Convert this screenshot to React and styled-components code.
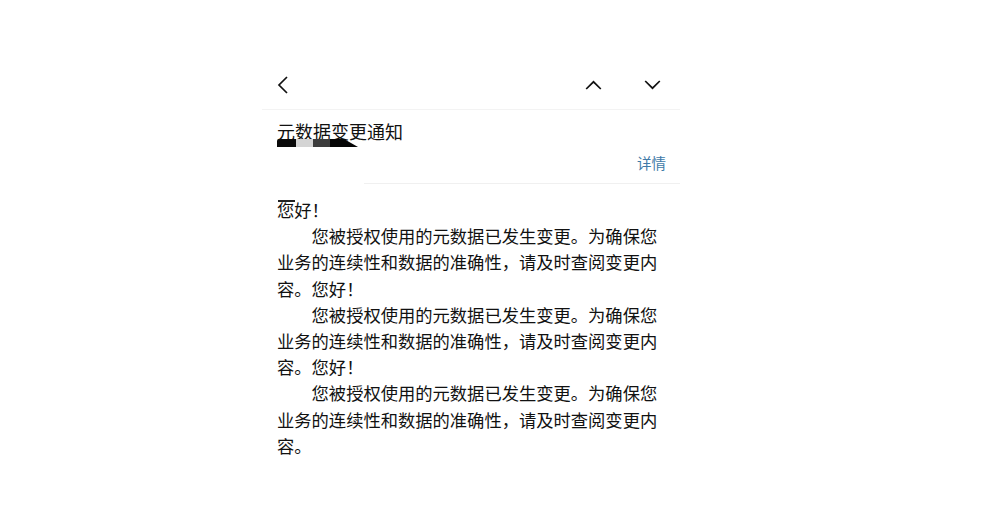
import React from "react";
import styled, { createGlobalStyle } from "styled-components";

const GlobalStyle = createGlobalStyle`
  html, body {
    margin: 0;
    padding: 0;
    background: #fff;
  }
  body {
    font-family: "Noto Sans CJK SC", "Noto Sans", sans-serif;
    color: #111;
  }
`;

const greeting = "您好！";
const paragraph =
  "\u3000\u3000您被授权使用的元数据已发生变更。为确保您业务的连续性和数据的准确性，请及时查阅变更内容。";
const bodyText = [0, 1, 2].map(() => greeting + "\n" + paragraph).join("");

function ChevronLeft() {
  return (
    <svg width="14" height="20" viewBox="0 0 14 20">
      <polyline
        points="11,2 3,10 11,18"
        fill="none"
        stroke="#111"
        strokeWidth="1.7"
      />
    </svg>
  );
}

function Chevron({ up }) {
  return (
    <svg width="17" height="12" viewBox="0 0 17 12">
      <polyline
        points={up ? "1.2,10 8.5,2.8 15.8,10" : "1.2,2 8.5,9.2 15.8,2"}
        fill="none"
        stroke="#111"
        strokeWidth="1.7"
      />
    </svg>
  );
}

function Redacted() {
  return (
    <svg width="82" height="8" viewBox="0 0 82 8">
      <path d="M2 0 H19 V8 H0 V2 Q0 0 2 0 Z" fill="#0a0a0a" />
      <rect x="19" y="0" width="17" height="8" fill="#d4d4d4" />
      <rect x="36" y="0" width="17" height="8" fill="#3c3c3c" />
      <path d="M53 0 H67 L81 8 H53 Z" fill="#050505" />
    </svg>
  );
}

function App() {
  return (
    <Page>
      <GlobalStyle />
      <Panel>
        <TopBar>
          <IconButton>
            <ChevronLeft />
          </IconButton>
          <NavGroup>
            <IconButton>
              <Chevron up />
            </IconButton>
            <IconButton>
              <Chevron />
            </IconButton>
          </NavGroup>
        </TopBar>

        <Header>
          <Title>元数据变更通知</Title>
          <Sender>
            <Redacted />
          </Sender>
          <DetailRow>
            <DetailLink>详情</DetailLink>
          </DetailRow>
        </Header>
        <Divider />

        <Body>
          <Mark />
          {bodyText}
        </Body>
      </Panel>
    </Page>
  );
}

const Page = styled.div`
  min-height: 515px;
  padding: 60px 0 0 262px;
  box-sizing: border-box;
`;

const Panel = styled.div`
  width: 418px;
`;

const TopBar = styled.div`
  display: flex;
  align-items: center;
  justify-content: space-between;
  height: 50px;
  padding: 0 19px 0 14px;
  border-bottom: 1px solid #f3f3f3;
  box-sizing: border-box;
`;

const NavGroup = styled.div`
  display: flex;
  align-items: center;
  gap: 42px;
`;

const IconButton = styled.div`
  display: flex;
  align-items: center;
  justify-content: center;
  padding: 0;
`;

const Header = styled.div`
  padding: 10px 14px 0 15px;
`;

const Title = styled.div`
  font-size: 18px;
  line-height: 22px;
  color: #111;
`;

const Sender = styled.div`
  display: flex;
  margin-top: -3px;
  height: 8px;
`;

const DetailRow = styled.div`
  display: flex;
  justify-content: flex-end;
  margin-top: 6px;
`;

const DetailLink = styled.span`
  font-size: 14.5px;
  line-height: 20px;
  color: #3f7aa8;
  cursor: pointer;
`;

const Divider = styled.div`
  margin: 10px 0 0 102px;
  height: 1px;
  background: #f0f0f0;
`;

const Body = styled.div`
  position: relative;
  padding: 13px 17px 0 15px;
  font-size: 17.3px;
  line-height: 26.2px;
  color: #111;
  white-space: pre-wrap;
  word-break: break-all;
`;

const Mark = styled.span`
  position: absolute;
  left: 16px;
  top: 16px;
  width: 17px;
  height: 1.5px;
  background: #222;
`;

export default App;
